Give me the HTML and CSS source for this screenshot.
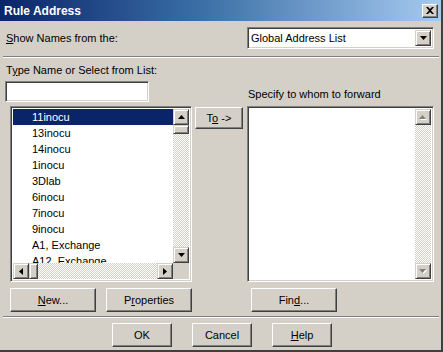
FILE: index.html
```html
<!DOCTYPE html>
<html lang="en">
<head>
  <meta charset="UTF-8">
  <title>Rule Address</title>
  <link rel="stylesheet" href="styles.css">
</head>
<body>
  <div class="dialog">
    <div class="titlebar">
      <span class="title">Rule Address</span>
      <button class="close-btn" aria-label="Close">
        <svg width="8" height="7" viewBox="0 0 8 7"><path d="M0 0h2l2 2 2-2h2L5 3.5 8 7H6L4 5 2 7H0l3-3.5z" fill="#000"/></svg>
      </button>
    </div>
    <div class="content">
      <div class="source-row">
        <span class="label"><u>S</u>how Names from the:</span>
        <div class="combo">
          <span class="combo-text">Global Address List</span>
          <span class="sb-btn combo-btn"><svg width="7" height="4" viewBox="0 0 7 4"><polygon points="0,0 7,0 3.5,4" fill="#000"/></svg></span>
        </div>
      </div>
      <div class="etched"></div>

      <div class="picker">
        <span class="label type-label">T<u>y</u>pe Name or Select from List:</span>
        <input class="name-input" type="text">
        <span class="label fwd-label">Specify to whom to forward</span>

        <div class="listbox left-list">
          <ul class="items">
            <li class="selected">11inocu</li>
            <li>13inocu</li>
            <li>14inocu</li>
            <li>1inocu</li>
            <li>3Dlab</li>
            <li>6inocu</li>
            <li>7inocu</li>
            <li>9inocu</li>
            <li>A1, Exchange</li>
            <li>A12, Exchange</li>
          </ul>
          <div class="vscroll">
            <span class="sb-btn"><svg width="7" height="4" viewBox="0 0 7 4"><polygon points="3.5,0 7,4 0,4" fill="#000"/></svg></span>
            <span class="sb-thumb v-thumb"></span>
            <span class="track"></span>
            <span class="sb-btn"><svg width="7" height="4" viewBox="0 0 7 4"><polygon points="0,0 7,0 3.5,4" fill="#000"/></svg></span>
          </div>
          <div class="hscroll">
            <span class="sb-btn"><svg width="4" height="7" viewBox="0 0 4 7"><polygon points="4,0 4,7 0,3.5" fill="#000"/></svg></span>
            <span class="sb-thumb h-thumb"></span>
            <span class="track"></span>
            <span class="sb-btn"><svg width="4" height="7" viewBox="0 0 4 7"><polygon points="0,0 4,3.5 0,7" fill="#000"/></svg></span>
          </div>
          <div class="corner"></div>
        </div>

        <div class="to-col">
          <button class="btn to-btn">T<u>o</u> -&gt;</button>
        </div>

        <div class="listbox right-list">
          <ul class="items"></ul>
          <div class="vscroll">
            <span class="sb-btn disabled"><svg width="8" height="5" viewBox="0 0 8 5"><polygon points="4.5,1 8,5 1,5" fill="#fff"/><polygon points="3.5,0 7,4 0,4" fill="#808080"/></svg></span>
            <span class="track"></span>
            <span class="sb-btn disabled"><svg width="8" height="5" viewBox="0 0 8 5"><polygon points="1,1 8,1 4.5,5" fill="#fff"/><polygon points="0,0 7,0 3.5,4" fill="#808080"/></svg></span>
          </div>
        </div>
      </div>

      <div class="actions">
        <button class="btn wide"><u>N</u>ew...</button>
        <button class="btn wide">P<u>r</u>operties</button>
        <button class="btn wide find-btn">Fin<u>d</u>...</button>
      </div>
      <div class="etched footer-rule"></div>

      <div class="footer">
        <button class="btn">OK</button>
        <button class="btn">Cancel</button>
        <button class="btn"><u>H</u>elp</button>
      </div>
    </div>
  </div>
</body>
</html>
```

FILE: styles.css
```css
:root {
  --face: #d4d0c8;
  --shadow: #808080;
  --dark: #404040;
  --select: #0a246a;
}
body {
  margin: 0;
  font-family: 'Liberation Sans', Arial, sans-serif;
  font-size: 11px;
  color: #000;
  background: var(--face);
}
.dialog {
  width: 443px;
  height: 352px;
  box-sizing: border-box;
  background: var(--face);
  border-right: 2px solid var(--dark);
  border-bottom: 2px solid var(--dark);
  display: flex;
  flex-direction: column;
}
.titlebar {
  height: 21px;
  flex: none;
  display: flex;
  align-items: center;
  justify-content: space-between;
  padding: 0 3px 0 4px;
  background: linear-gradient(90deg, #0a246a 0%, #3a6ea5 45%, #a6caf0 100%);
}
.title {
  color: #fff;
  font-weight: bold;
  font-size: 12px;
}
.close-btn {
  width: 16px;
  height: 14px;
  padding: 0;
  display: flex;
  align-items: center;
  justify-content: center;
  background: var(--face);
  border: 1px solid;
  border-color: #fff var(--dark) var(--dark) #fff;
  box-shadow: inset -1px -1px var(--shadow);
}
.content {
  padding: 0 7px 0 5px;
}
u {
  text-decoration: underline;
  text-underline-offset: 1px;
}

/* address book selector */
.source-row {
  display: flex;
  align-items: center;
  justify-content: space-between;
  margin-top: 6px;
  padding-left: 1px;
}
.combo {
  width: 187px;
  height: 22px;
  box-sizing: border-box;
  display: flex;
  align-items: center;
  background: #fff;
  border: 1px solid;
  border-color: var(--shadow) #fff #fff var(--shadow);
  box-shadow: inset 1px 1px var(--dark), inset -1px -1px var(--face);
  padding: 2px;
}
.combo-text {
  flex: 1;
  padding-left: 1px;
}
.combo-btn {
  width: 16px;
  height: 16px;
}

.etched {
  height: 0;
  border-top: 1px solid var(--shadow);
  border-bottom: 1px solid #fff;
  margin: 7px -5px 0 -2px;
}
.footer-rule {
  margin-top: 4px;
}

/* name picker */
.picker {
  display: grid;
  grid-template-columns: 188px 54px 187px;
  grid-template-rows: 14px 21px 176px;
  row-gap: 4px;
  margin-top: 5px;
}
.type-label {
  grid-column: 1 / 3;
  padding-left: 1px;
  line-height: 14px;
}
.name-input {
  grid-column: 1;
  grid-row: 2;
  width: 144px;
  height: 21px;
  box-sizing: border-box;
  margin: 0;
  background: #fff;
  border: 1px solid;
  border-color: var(--shadow) #fff #fff var(--shadow);
  box-shadow: inset 1px 1px var(--dark), inset -1px -1px var(--face);
}
.fwd-label {
  grid-column: 3;
  grid-row: 2;
  align-self: end;
  padding-left: 1px;
  line-height: 14px;
  margin-bottom: 1px;
}

.listbox {
  grid-row: 3;
  box-sizing: border-box;
  background: #fff;
  border: 1px solid;
  border-color: var(--shadow) #fff #fff var(--shadow);
  box-shadow: inset 1px 1px var(--dark), inset -1px -1px var(--face);
  padding: 2px;
  display: grid;
  grid-template-columns: 1fr 16px;
  grid-template-rows: 1fr 16px;
  overflow: hidden;
}
.left-list {
  grid-column: 1;
  margin-left: 5px;
  width: 182px;
}
.right-list {
  grid-column: 3;
  grid-template-rows: 1fr;
}
.items {
  list-style: none;
  margin: 0;
  padding: 0;
  overflow: hidden;
  min-height: 0;
}
.items li {
  height: 16px;
  line-height: 16px;
  padding-left: 19px;
  white-space: nowrap;
}
.items li.selected {
  background: var(--select);
  color: #fff;
}

.vscroll, .hscroll {
  display: flex;
  background-image: repeating-conic-gradient(var(--face) 0 25%, #fff 0 50%);
  background-size: 2px 2px;
}
.vscroll {
  flex-direction: column;
  grid-column: 2;
  grid-row: 1;
}
.hscroll {
  grid-column: 1;
  grid-row: 2;
}
.track {
  flex: 1;
}
.corner {
  grid-column: 2;
  grid-row: 2;
  background: var(--face);
}
.sb-btn, .sb-thumb {
  flex: none;
  width: 16px;
  height: 16px;
  box-sizing: border-box;
  display: flex;
  align-items: center;
  justify-content: center;
  background: var(--face);
  border: 1px solid;
  border-color: var(--face) var(--dark) var(--dark) var(--face);
  box-shadow: inset 1px 1px #fff, inset -1px -1px var(--shadow);
}
.v-thumb {
  height: 9px;
}
.h-thumb {
  width: 9px;
}

/* buttons */
.btn {
  font-family: inherit;
  font-size: 11px;
  color: #000;
  width: 60px;
  height: 24px;
  padding: 0;
  background: var(--face);
  border: 1px solid;
  border-color: #fff var(--dark) var(--dark) #fff;
  box-shadow: inset -1px -1px var(--shadow);
}
.to-col {
  grid-column: 2;
  grid-row: 3;
  padding-left: 2px;
}
.to-btn {
  width: 48px;
  height: 22px;
  margin-top: 1px;
}
.actions {
  display: flex;
  gap: 10px;
  margin: 6px 0 0 5px;
}
.btn.wide {
  width: 86px;
}
.find-btn {
  margin-left: 49px;
}
.footer {
  display: flex;
  justify-content: center;
  gap: 20px;
  margin-top: 5px;
  padding-left: 5px;
}
```
